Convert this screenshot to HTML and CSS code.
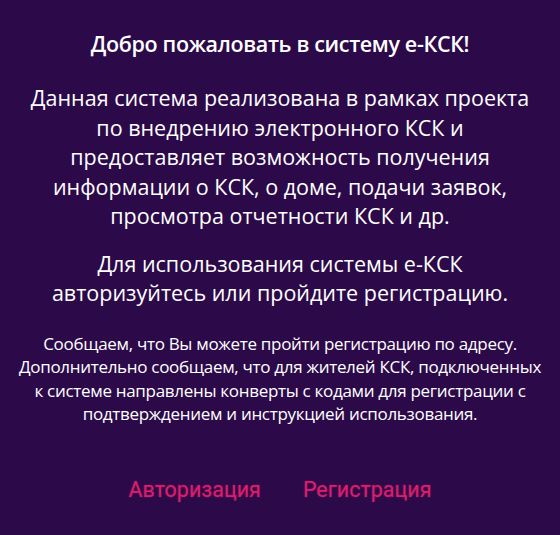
FILE: index.html
```html
<!DOCTYPE html>
<html lang="ru">
<head>
<meta charset="utf-8">
<link rel="stylesheet" href="styles.css">
</head>
<body>
<main class="welcome">
  <h1 class="title">Добро пожаловать в систему е-КСК!</h1>
  <p class="lead">Данная система реализована в рамках проекта по внедрению электронного КСК и предоставляет возможность получения информации о КСК, о доме, подачи заявок, просмотра отчетности КСК и др.</p>
  <p class="lead second">Для использования системы е-КСК авторизуйтесь или пройдите регистрацию.</p>
  <p class="note">Сообщаем, что Вы можете пройти регистрацию по адресу.<br>Дополнительно сообщаем, что для жителей КСК, подключенных к системе направлены конверты с кодами для регистрации с подтверждением и инструкцией использования.</p>
  <nav class="actions">
    <a class="action" href="#">Авторизация</a>
    <a class="action" href="#">Регистрация</a>
  </nav>
</main>
</body>
</html>
```
FILE: styles.css
```css
html, body {
  margin: 0;
  padding: 0;
  background: #2c0a49;
  height: 100%;
}
.welcome {
  width: 540px;
  margin: 0 auto;
  padding-top: 28px;
  display: flex;
  flex-direction: column;
  align-items: center;
  text-align: center;
  color: #ffffff;
  font-family: "Open Sans", sans-serif;
}
.title {
  margin: 0 0 23px;
  font-size: 21.5px;
  font-weight: 600;
  letter-spacing: -0.35px;
  line-height: 32px;
}
.lead {
  margin: 0 0 18px;
  font-size: 21.5px;
  line-height: 29.5px;
  width: 520px;
}
.note {
  margin: 6px 0 51px;
  font-size: 17px;
  line-height: 23.6px;
  letter-spacing: -0.3px;
  width: 530px;
}
.actions {
  display: flex;
  gap: 42px;
}
.action {
  font-family: Roboto, sans-serif;
  font-size: 21.5px;
  color: #d81f6c;
  text-decoration: none;
  text-shadow: 0 0 2px rgba(216, 31, 108, 0.5);
}
```
